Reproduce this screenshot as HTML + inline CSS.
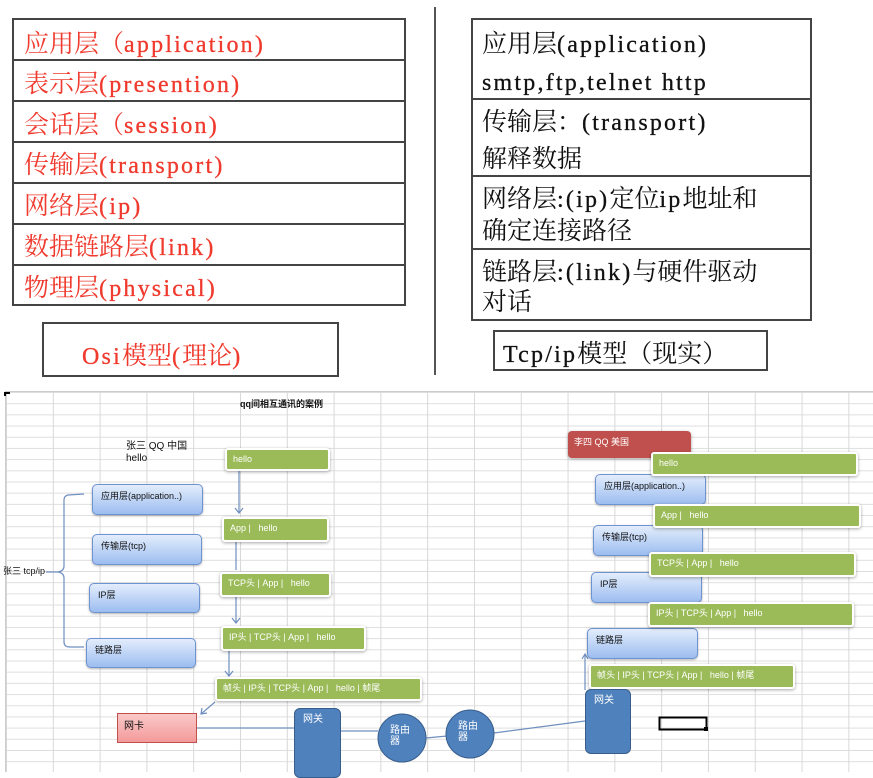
<!DOCTYPE html>
<html><head><meta charset="utf-8">
<style>
*{margin:0;padding:0;box-sizing:border-box}
body{width:873px;height:772px;background:#fff;position:relative;overflow:hidden;font-family:"Liberation Sans","Noto Sans CJK SC",sans-serif}
.a{position:absolute}
.tb{position:absolute;border:2px solid #444;}
.row{position:absolute;left:0;right:0;border-top:2px solid #444;}
.s{font-family:"Noto Serif CJK SC",serif;font-size:25px;white-space:nowrap;position:absolute;line-height:30px;height:30px}
.m{font-family:"Liberation Serif",serif;font-size:24px;letter-spacing:2.2px;-webkit-text-stroke:0.3px}
.r{color:#f03a2e}
.k{color:#111}
.grid{position:absolute;left:5px;top:391px;width:868px;height:381px;
background-image:linear-gradient(to right,#d8d8d8 1px,transparent 1px),linear-gradient(to bottom,#dedede 1px,transparent 1px);
background-size:46.8px 100%,100% 11.2px;background-position:0 0,0 0;border-left:1px solid #ccc;border-top:1px solid #ccc}
.g{position:absolute;background:#9bbb59;border:2px solid #fff;border-radius:3px;box-shadow:0 1px 3px rgba(0,0,0,.35);color:#fff;font-size:9px;padding:3px 0 0 6px;white-space:nowrap;line-height:12px}
.b{position:absolute;background:linear-gradient(#e3edfc,#9cbdf0);border:1px solid #6d93d1;border-radius:5px;box-shadow:0 1px 2px rgba(0,0,0,.3);color:#111;font-size:9px;padding:5px 0 0 8px;white-space:nowrap;line-height:12px}
.t{position:absolute;font-size:9px;color:#111;white-space:nowrap;line-height:12px}
.db{position:absolute;background:#4f81bd;border:1px solid #385d8a;color:#fff;font-size:10px;padding:5px 0 0 8px;line-height:12px}
</style></head><body>

<!-- left table -->
<div class="tb" style="left:12px;top:18px;width:394px;height:288px">
 <div class="row" style="top:39px"></div><div class="row" style="top:80px"></div><div class="row" style="top:121px"></div>
 <div class="row" style="top:162px"></div><div class="row" style="top:203px"></div><div class="row" style="top:244px"></div>
</div>
<div class="s r" style="left:24px;top:27px">应用层（<span class="m">application)</span></div>
<div class="s r" style="left:24px;top:67px">表示层<span class="m">(presention)</span></div>
<div class="s r" style="left:24px;top:108px">会话层（<span class="m">session)</span></div>
<div class="s r" style="left:24px;top:148px">传输层<span class="m">(transport)</span></div>
<div class="s r" style="left:24px;top:189px">网络层<span class="m">(ip)</span></div>
<div class="s r" style="left:24px;top:230px">数据链路层<span class="m">(link)</span></div>
<div class="s r" style="left:24px;top:271px">物理层<span class="m">(physical)</span></div>
<div class="tb" style="left:42px;top:322px;width:297px;height:55px"></div>
<div class="s r" style="left:82px;top:339px"><span class="m">Osi</span>模型<span class="m">(</span>理论<span class="m">)</span></div>

<div class="a" style="left:434px;top:7px;width:2px;height:368px;background:#555"></div>

<!-- right table -->
<div class="tb" style="left:471px;top:18px;width:341px;height:303px">
 <div class="row" style="top:78px"></div><div class="row" style="top:155px"></div><div class="row" style="top:228px"></div>
</div>
<div class="s k" style="left:482px;top:27px">应用层<span class="m">(application)</span></div>
<div class="s k" style="left:482px;top:65px"><span class="m">smtp,ftp,telnet http</span></div>
<div class="s k" style="left:482px;top:105px">传输层：<span class="m">(transport)</span></div>
<div class="s k" style="left:482px;top:142px">解释数据</div>
<div class="s k" style="left:482px;top:182px">网络层<span class="m">:(ip)</span>定位<span class="m">ip</span>地址和</div>
<div class="s k" style="left:482px;top:214px">确定连接路径</div>
<div class="s k" style="left:482px;top:255px">链路层<span class="m">:(link)</span>与硬件驱动</div>
<div class="s k" style="left:482px;top:285px">对话</div>
<div class="tb" style="left:493px;top:330px;width:275px;height:41px"></div>
<div class="s k" style="left:503px;top:337px"><span class="m">Tcp/ip</span>模型（现实）</div>

<!-- bottom grid -->
<div class="grid"></div>
<div class="a" style="left:4px;top:392px;width:6px;height:4px;border-left:2px solid #000;border-top:2px solid #000"></div>
<div class="t" style="left:240px;top:398px;font-weight:bold;font-size:9px">qq间相互通讯的案例</div>
<div class="t" style="left:126px;top:441px;font-size:10px">张三 QQ 中国<br>hello</div>
<div class="t" style="left:3px;top:565px;font-size:9px">张三 tcp/ip</div>

<svg class="a" style="left:0;top:0" width="873" height="772">
 <g fill="none" stroke="#6f8fc0" stroke-width="1.2">
  <path d="M84 494 L68 495 Q64 496 64 500 L64 566 Q64 571 58 572 L46 572 M58 572 Q64 573 64 578 L64 642 Q64 647 70 647 L84 647"/>
  <path d="M239 470 V513 M235 508 L239 513 L243 508"/>
  <path d="M236 541 V570"/>
  <path d="M236 596 V623 M232 618 L236 623 L240 618"/>
  <path d="M229 650 V676 M225 671 L229 676 L233 671"/>
  <path d="M215 702 L201 714 M202 708 L201 714 L207 713"/>
  <path d="M196 728 H294"/>
  <path d="M340 731 H378"/>
  <path d="M426 738 L447 736"/>
  <path d="M494 733 L585 721"/>
  <path d="M585 690 V654 M582 659 L585 654 L588 659"/>
 </g>
 <circle cx="402" cy="738" r="24" fill="#4f81bd" stroke="#385d8a"/>
 <circle cx="470" cy="734" r="24" fill="#4f81bd" stroke="#385d8a"/>
 <rect x="659.5" y="717.5" width="47" height="12" fill="none" stroke="#000" stroke-width="2"/>
 <rect x="704" y="727" width="4" height="4" fill="#000"/>
</svg>
<div class="t" style="left:390px;top:725px;color:#fff;font-size:10px;line-height:11px">路由<br>器</div>
<div class="t" style="left:458px;top:721px;color:#fff;font-size:10px;line-height:11px">路由<br>器</div>

<!-- left column -->
<div class="b" style="left:92px;top:484px;width:111px;height:31px">应用层(application..)</div>
<div class="b" style="left:92px;top:534px;width:110px;height:31px">传输层(tcp)</div>
<div class="b" style="left:89px;top:583px;width:111px;height:30px">IP层</div>
<div class="b" style="left:86px;top:638px;width:110px;height:30px">链路层</div>
<div class="g" style="left:225px;top:448px;width:105px;height:23px">hello</div>
<div class="g" style="left:222px;top:517px;width:107px;height:25px">App |&nbsp;&nbsp; hello</div>
<div class="g" style="left:220px;top:572px;width:111px;height:25px">TCP头 | App |&nbsp;&nbsp; hello</div>
<div class="g" style="left:221px;top:626px;width:145px;height:25px">IP头 | TCP头 | App |&nbsp;&nbsp; hello</div>
<div class="g" style="left:215px;top:677px;width:207px;height:24px">帧头 | IP头 | TCP头 | App |&nbsp;&nbsp; hello | 帧尾</div>
<div class="a" style="left:117px;top:713px;width:80px;height:30px;background:linear-gradient(#fbc9c9,#f39a9a);border:1px solid #c0504d;font-size:10px;padding:3px 0 0 6px;color:#111">网卡</div>
<div class="db" style="left:294px;top:708px;width:47px;height:70px;border-radius:6px">网关</div>

<!-- right column -->
<div class="a" style="left:568px;top:431px;width:123px;height:27px;background:#c0504d;border-radius:4px;box-shadow:0 1px 3px rgba(0,0,0,.35);color:#fff;font-size:9px;padding:4px 0 0 6px">李四 QQ 美国</div>
<div class="b" style="left:595px;top:474px;width:111px;height:31px">应用层(application..)</div>
<div class="b" style="left:593px;top:525px;width:110px;height:31px">传输层(tcp)</div>
<div class="b" style="left:591px;top:572px;width:111px;height:31px">IP层</div>
<div class="b" style="left:587px;top:628px;width:111px;height:31px">链路层</div>
<div class="g" style="left:651px;top:452px;width:207px;height:24px">hello</div>
<div class="g" style="left:653px;top:504px;width:208px;height:24px">App |&nbsp;&nbsp; hello</div>
<div class="g" style="left:649px;top:552px;width:207px;height:25px">TCP头 | App |&nbsp;&nbsp; hello</div>
<div class="g" style="left:648px;top:602px;width:206px;height:25px">IP头 | TCP头 | App |&nbsp;&nbsp; hello</div>
<div class="g" style="left:589px;top:664px;width:206px;height:25px">帧头 | IP头 | TCP头 | App |&nbsp;&nbsp; hello | 帧尾</div>
<div class="db" style="left:585px;top:689px;width:46px;height:65px;border-radius:6px">网关</div>

</body></html>
